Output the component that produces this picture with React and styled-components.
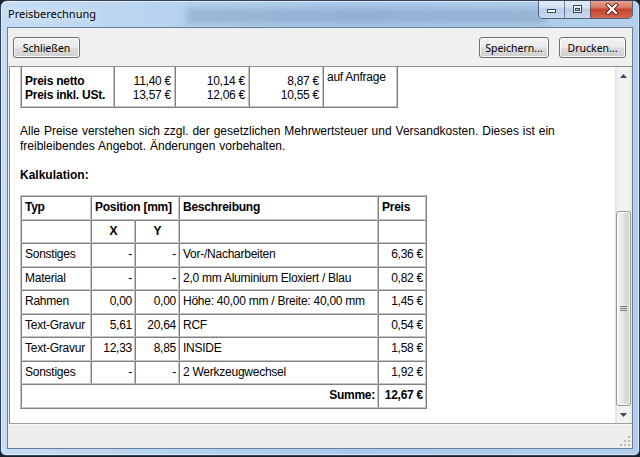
import React from 'react';
import styled, { createGlobalStyle } from 'styled-components';

const GlobalStyle = createGlobalStyle`
  html, body {
    margin: 0;
    padding: 0;
    background: #18212d;
  }
  body {
    width: 640px;
    height: 457px;
    overflow: hidden;
  }
`;

const Window = styled.div`
  position: relative;
  box-sizing: border-box;
  width: 640px;
  height: 456px;
  display: flex;
  flex-direction: column;
  padding: 0 6px 6px;
  border: 1px solid #33435a;
  border-radius: 7px 7px 6px 6px;
  background: linear-gradient(90deg, #c6ddf4 0%, #b6d2ef 28%, #a9c9eb 55%, #b3cfed 100%);
  box-shadow: inset 0 1px 0 rgba(255, 255, 255, 0.6), inset 1px 0 0 rgba(255, 255, 255, 0.45),
    inset -1px 0 0 rgba(255, 255, 255, 0.45), inset 0 -1px 0 rgba(255, 255, 255, 0.5);
  overflow: hidden;
`;

// what shines through the glass from the window behind
const GlassShade = styled.div`
  position: absolute;
  left: 185px;
  top: 7px;
  width: 360px;
  height: 16px;
  background: rgba(70, 95, 130, 0.22);
  filter: blur(3px);
`;

const TitleBar = styled.div`
  position: relative;
  height: 26px;
  display: flex;
  align-items: flex-start;
`;

const Title = styled.div`
  padding-left: 1px;
  font: 11px/26px "Noto Sans", sans-serif;
  color: #000;
  text-shadow: 0 0 6px rgba(255, 255, 255, 0.9);
`;

const CaptionButtons = styled.div`
  display: flex;
  margin: -1px 0 0 auto;
  border-radius: 0 0 5px 5px;
  overflow: hidden;
  border: 1px solid rgba(45, 65, 95, 0.75);
  border-top: none;
`;

const CaptionButton = styled.div`
  width: ${p => p.$w}px;
  height: 18px;
  display: flex;
  align-items: center;
  justify-content: center;
  box-sizing: border-box;
  border-left: ${p => (p.$first ? 'none' : '1px solid rgba(45, 65, 95, 0.6)')};
  background: ${p =>
    p.$close
      ? 'linear-gradient(#e9a898 0%, #d7735e 45%, #c4432c 50%, #d2654f 100%)'
      : 'linear-gradient(#e4eef9 0%, #cfdff1 45%, #b9cde5 50%, #c9daee 100%)'};
`;

const Client = styled.div`
  flex: 1;
  min-height: 0;
  display: flex;
  flex-direction: column;
  border: 1px solid #6b7f98;
  background: #f0f0f0;
`;

const Toolbar = styled.div`
  height: 38px;
  box-sizing: border-box;
  padding: 9px 6px 0 5px;
  display: flex;
  align-items: flex-start;
  gap: 10px;
`;

const Spacer = styled.div`
  flex: 1;
`;

const Button = styled.button`
  width: ${p => p.$w}px;
  height: 21px;
  padding: 0;
  font: 10.5px "Noto Sans", sans-serif;
  color: #000;
  border: 1px solid #707070;
  border-radius: 3px;
  background: linear-gradient(#f2f2f2 0%, #ebebeb 48%, #dddddd 52%, #cfcfcf 100%);
  box-shadow: inset 0 0 0 1px rgba(255, 255, 255, 0.8);
`;

const ContentFrame = styled.div`
  height: 358px;
  box-sizing: border-box;
  margin-left: 1px;
  display: flex;
  border-top: 1px solid #8a8d92;
  border-left: 1px solid #828790;
  border-bottom: 1px solid #a0a0a0;
`;

const Viewport = styled.div`
  flex: 1;
  overflow: hidden;
  background: #fff;
  padding: 0 10px;
  font: 12px "Liberation Sans", Arial, sans-serif;
  color: #000;
`;

const Table = styled.table`
  table-layout: fixed;
  border-collapse: separate;
  border-spacing: 0;
  width: ${p => p.$w}px;
  margin-top: ${p => p.$top || 0}px;
  border: 1px solid;
  border-color: #c4c4c4 #808080 #808080 #c4c4c4;
`;

const Col = styled.col`
  width: ${p => p.$w}px;
`;

const Cell = styled.td`
  box-sizing: border-box;
  padding: ${p => (p.$tall ? '3px 3px 0' : '0 2px 0 3px')};
  height: ${p => (p.$tall ? '41px' : '23.5px')};
  line-height: ${p => (p.$tall ? '14px' : '21.5px')};
  border: 1px solid;
  border-color: #808080 #c4c4c4 #c4c4c4 #808080;
  text-align: ${p => p.$align || 'left'};
  vertical-align: ${p => p.$valign || 'middle'};
  font-weight: ${p => (p.$bold ? 700 : 400)};
  white-space: nowrap;
  letter-spacing: -0.25px;
`;

const Note = styled.p`
  margin: 16px 0 0;
  line-height: 15px;
  white-space: nowrap;
  word-spacing: 0.6px;
`;

const Heading = styled.div`
  margin: 14px 0 12px;
  line-height: 15px;
  font-weight: 700;
`;

const Scrollbar = styled.div`
  width: 17px;
  display: flex;
  flex-direction: column;
  background: linear-gradient(90deg, #e3e3e3 0%, #f2f2f2 20%, #f2f2f2 80%, #e6e6e6 100%);
`;

const ArrowButton = styled.div`
  height: 17px;
  display: flex;
  align-items: center;
  justify-content: center;
`;

const Track = styled.div`
  flex: 1;
  padding-top: ${p => p.$offset}px;
`;

const Thumb = styled.div`
  height: ${p => p.$h}px;
  margin: 0 1px;
  box-sizing: border-box;
  border: 1px solid #979797;
  border-radius: 3px;
  background: linear-gradient(90deg, #f4f4f4 0%, #e9e9e9 45%, #dcdcdc 55%, #d3d3d3 100%);
  box-shadow: inset 0 0 0 1px rgba(255, 255, 255, 0.7);
  display: flex;
  align-items: center;
  justify-content: center;
`;

const StatusBar = styled.div`
  flex: 1;
  position: relative;
  background: #efedec;
  border-top: 1px solid #f8f8f8;
`;

const Grip = styled.svg`
  position: absolute;
  right: 2px;
  bottom: 2px;
`;

const MinIcon = () => (
  <svg width="11" height="10" viewBox="0 0 11 10">
    <rect x="1.5" y="5.5" width="8" height="3" fill="#fff" stroke="#34475f" />
  </svg>
);

const MaxIcon = () => (
  <svg width="11" height="10" viewBox="0 0 11 10">
    <rect x="1.5" y="1.5" width="8" height="7" fill="none" stroke="#34475f" />
    <rect x="2.5" y="2.5" width="6" height="5" fill="none" stroke="#fff" />
    <rect x="3.5" y="4.5" width="4" height="2" fill="none" stroke="#34475f" />
  </svg>
);

const CloseIcon = () => (
  <svg width="14" height="12" viewBox="0 0 14 12">
    <path d="M3 2 L11 10 M11 2 L3 10" stroke="#5a1d14" strokeWidth="4" strokeLinecap="square" />
    <path d="M3 2 L11 10 M11 2 L3 10" stroke="#fff" strokeWidth="2.2" strokeLinecap="square" />
  </svg>
);

const Arrow = ({ down }) => (
  <svg width="7" height="4" viewBox="0 0 7 4">
    <path d={down ? 'M0 0 H7 L3.5 4 Z' : 'M0 4 H7 L3.5 0 Z'} fill="#3b4a5c" />
  </svg>
);

const GripLines = () => (
  <svg width="7" height="6" viewBox="0 0 7 6">
    <path d="M0 0.5 H7 M0 2.5 H7 M0 4.5 H7" stroke="#7d7d7d" />
  </svg>
);

const prices = [
  ['11,40 €', '13,57 €'],
  ['10,14 €', '12,06 €'],
  ['8,87 €', '10,55 €'],
];

const rows = [
  ['Sonstiges', '-', '-', 'Vor-/Nacharbeiten', '6,36 €'],
  ['Material', '-', '-', '2,0 mm Aluminium Eloxiert / Blau', '0,82 €'],
  ['Rahmen', '0,00', '0,00', 'Höhe: 40,00 mm / Breite: 40,00 mm', '1,45 €'],
  ['Text-Gravur', '5,61', '20,64', 'RCF', '0,54 €'],
  ['Text-Gravur', '12,33', '8,85', 'INSIDE', '1,58 €'],
  ['Sonstiges', '-', '-', '2 Werkzeugwechsel', '1,92 €'],
];

const App = () => (
  <>
    <GlobalStyle />
    <Window>
      <GlassShade />
      <TitleBar>
        <Title>Preisberechnung</Title>
        <CaptionButtons>
          <CaptionButton $w={25} $first>
            <MinIcon />
          </CaptionButton>
          <CaptionButton $w={26}>
            <MaxIcon />
          </CaptionButton>
          <CaptionButton $w={42} $close>
            <CloseIcon />
          </CaptionButton>
        </CaptionButtons>
      </TitleBar>
      <Client>
        <Toolbar>
          <Button $w={67}>Schließen</Button>
          <Spacer />
          <Button $w={70}>Speichern...</Button>
          <Button $w={67}>Drucken...</Button>
        </Toolbar>
        <ContentFrame>
          <Viewport>
            <Table $w={378} $top={-2}>
              <colgroup>
                <Col $w={93} />
                <Col $w={61} />
                <Col $w={74} />
                <Col $w={74} />
                <Col $w={74} />
              </colgroup>
              <tbody>
                <tr>
                  <Cell $tall $bold>
                    Preis netto
                    <br />
                    Preis inkl. USt.
                  </Cell>
                  {prices.map(([net, gross]) => (
                    <Cell $tall $align="right" key={net}>
                      {net}
                      <br />
                      {gross}
                    </Cell>
                  ))}
                  <Cell $tall $valign="top">
                    auf Anfrage
                  </Cell>
                </tr>
              </tbody>
            </Table>
            <Note>
              Alle Preise verstehen sich zzgl. der gesetzlichen Mehrwertsteuer und Versandkosten. Dieses ist ein
              <br />
              freibleibendes Angebot. Änderungen vorbehalten.
            </Note>
            <Heading>Kalkulation:</Heading>
            <Table $w={407}>
              <colgroup>
                <Col $w={70} />
                <Col $w={44} />
                <Col $w={44} />
                <Col $w={199} />
                <Col $w={48} />
              </colgroup>
              <tbody>
                <tr>
                  <Cell $bold>Typ</Cell>
                  <Cell $bold colSpan={2}>
                    Position [mm]
                  </Cell>
                  <Cell $bold>Beschreibung</Cell>
                  <Cell $bold>Preis</Cell>
                </tr>
                <tr>
                  <Cell />
                  <Cell $bold $align="center">
                    X
                  </Cell>
                  <Cell $bold $align="center">
                    Y
                  </Cell>
                  <Cell />
                  <Cell />
                </tr>
                {rows.map((r, i) => (
                  <tr key={i}>
                    <Cell>{r[0]}</Cell>
                    <Cell $align="right">{r[1]}</Cell>
                    <Cell $align="right">{r[2]}</Cell>
                    <Cell>{r[3]}</Cell>
                    <Cell $align="right">{r[4]}</Cell>
                  </tr>
                ))}
                <tr>
                  <Cell $bold $align="right" colSpan={4}>
                    Summe:
                  </Cell>
                  <Cell $bold $align="right">
                    12,67 €
                  </Cell>
                </tr>
              </tbody>
            </Table>
          </Viewport>
          <Scrollbar>
            <ArrowButton>
              <Arrow />
            </ArrowButton>
            <Track $offset={127}>
              <Thumb $h={195}>
                <GripLines />
              </Thumb>
            </Track>
            <ArrowButton>
              <Arrow down />
            </ArrowButton>
          </Scrollbar>
        </ContentFrame>
        <StatusBar>
          <Grip width="11" height="11" viewBox="0 0 11 11">
            {[
              [9, 1], [9, 5], [5, 5], [9, 9], [5, 9], [1, 9],
            ].map(([x, y]) => (
              <rect key={`${x}-${y}`} x={x} y={y} width="2" height="2" fill="#b9b9b9" />
            ))}
          </Grip>
        </StatusBar>
      </Client>
    </Window>
  </>
);

export default App;
